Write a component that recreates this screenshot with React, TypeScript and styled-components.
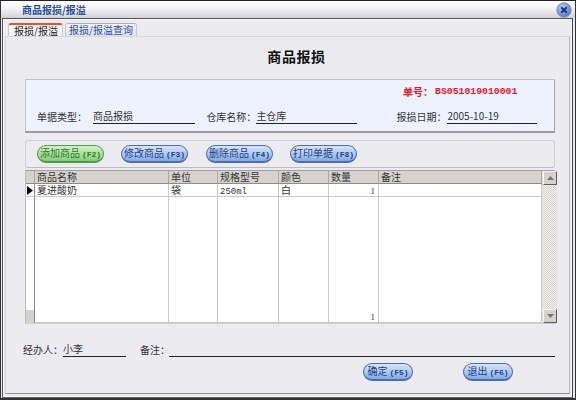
import React from "react";
import styled, { createGlobalStyle } from "styled-components";

const GlobalStyle = createGlobalStyle`
  html, body {
    margin: 0;
    padding: 0;
    background: #ecebef;
  }
  * {
    box-sizing: border-box;
  }
`;

const CJK = `"Noto Sans CJK SC", "Liberation Sans", sans-serif`;

const Window = styled.div`
  width: 576px;
  height: 400px;
  display: flex;
  flex-direction: column;
  background: #ecebef;
  border-top: 1px solid #222;
  border-left: 1px solid #333;
  border-right: 1px solid #333;
  border-bottom: 2px solid #333;
  font-family: ${CJK};
  font-size: 10px;
  color: #222;
  overflow: hidden;
`;

const TitleBar = styled.div`
  height: 17px;
  flex: none;
  display: flex;
  align-items: center;
  justify-content: space-between;
  padding: 0 3px 0 21px;
  background: linear-gradient(#ffffff, #f3f3f5 45%, #d2d2d4);
`;

const Title = styled.span`
  font-size: 10px;
  font-weight: 700;
  line-height: 12px;
  color: #2a4f96;
`;

const Frame = styled.div`
  flex: 1;
  min-height: 0;
  margin: 0 2px 0 1px;
  display: flex;
  flex-direction: column;
  border: 1px solid #555;
  border-right-color: #444;
  border-bottom-color: #666;
  box-shadow: inset 0 0 0 1px #f6f6f6;
  padding: 4px 2px 3px 2px;
`;

const TabStrip = styled.div`
  height: 13px;
  flex: none;
  display: flex;
  gap: 2px;
  padding-left: 3px;
`;

const Tab = styled.div<{ $active?: boolean }>`
  height: 13px;
  padding: 0 0 0 ${(p) => (p.$active ? 5 : 3)}px;
  width: ${(p) => (p.$active ? 55 : 72)}px;
  line-height: 12px;
  white-space: nowrap;
  font-size: 10px;
  color: ${(p) => (p.$active ? "#222" : "#2a4f96")};
  background: ${(p) => (p.$active ? "#f6f6f8" : "linear-gradient(#f2f3f8, #dfe3ee)")};
  border: 1px solid #c8cbd6;
  border-bottom: none;
  border-top: ${(p) => (p.$active ? "2px solid #e8522a" : "1px solid #a9afc4")};
  border-radius: 3px 3px 0 0;
`;

const Pane = styled.div`
  flex: 1;
  min-height: 0;
  display: flex;
  flex-direction: column;
  border: 1px solid #d8d8dc;
  border-bottom-color: #8e8e90;
  border-right-color: #b8b8bc;
  padding: 0 14px 0 19px;
`;

const Heading = styled.h1`
  margin: 0;
  height: 42px;
  flex: none;
  display: flex;
  align-items: flex-start;
  justify-content: center;
  padding: 9px 0 0 13px;
  font-size: 14px;
  line-height: 20px;
  font-weight: 700;
  letter-spacing: 0.6px;
  color: #111;
`;

const InfoPanel = styled.div`
  height: 54px;
  flex: none;
  display: flex;
  flex-direction: column;
  background: #edf2fe;
  border: 1px solid #c4c4c8;
  border-bottom: 2px solid #9c9ca0;
  border-right-color: #a4a4a8;
`;

const OrderNo = styled.div`
  height: 13px;
  margin: 5px 0 0 377px;
  display: flex;
  align-items: center;
  color: #f0141e;
  font-weight: 700;
  font-size: 10px;
  white-space: nowrap;
`;

const OrderCode = styled.span`
  margin-left: 2px;
  font-family: "Liberation Mono", monospace;
  font-size: 9.8px;
`;

const InfoRow = styled.div`
  margin-top: 11px;
  display: flex;
  padding-left: 11px;
`;

const Field = styled.div<{ $w: number }>`
  width: ${(p) => p.$w}px;
  display: flex;
  align-items: flex-end;
  white-space: nowrap;
`;

const Label = styled.span<{ $w: number }>`
  flex: none;
  width: ${(p) => p.$w}px;
  line-height: 14px;
  color: #333;
`;

const Value = styled.span<{ $w: number }>`
  flex: none;
  width: ${(p) => p.$w}px;
  height: 15px;
  line-height: 13px;
  color: #333;
  border-bottom: 1px solid #222;
`;

const ToolPanel = styled.div`
  height: 28px;
  flex: none;
  margin-top: 7px;
  display: flex;
  align-items: center;
  padding: 0 0 1px 11px;
  background: #ecebef;
  border: 1px solid #cfcfd3;
  border-radius: 3px;
  border-bottom-color: #bcbcc0;
`;

const Pill = styled.button<{ $green?: boolean; $w: number; $gap?: number }>`
  width: ${(p) => p.$w}px;
  height: 18px;
  margin: 0 ${(p) => p.$gap ?? 0}px 0 0;
  padding: 0;
  flex: none;
  font-family: ${CJK};
  font-size: 10px;
  line-height: 14px;
  white-space: nowrap;
  color: ${(p) => (p.$green ? "#2e7a2c" : "#26408c")};
  border-radius: 9px;
  border: 1px solid ${(p) => (p.$green ? "#4f9a50" : "#4f6cb0")};
  border-bottom-width: 2px;
  background: ${(p) =>
    p.$green
      ? "linear-gradient(#d2f0c8, #aee09e 50%, #86cd78)"
      : "linear-gradient(#d6e4f8, #aecbf0 50%, #83a9e2)"};
`;

const Fkey = styled.span`
  font-family: "Liberation Mono", monospace;
  font-size: 8px;
  font-weight: 700;
  margin-left: 2px;
`;

const GridBox = styled.div`
  height: 154px;
  flex: none;
  margin-top: 2px;
  display: grid;
  grid-template-columns: 9px 134px 49px 61px 50px 50px 163px 15px;
  grid-template-rows: 13px 13px 1fr 13px;
  background: #fff;
  border: 1px solid #bcbcbc;
  border-top: 1px solid #a0a0a0;
  border-bottom: 1px solid #d0d0d0;
`;

const HeadCell = styled.div`
  background: #d6d3ce;
  border-right: 1px solid #a8a8a4;
  border-bottom: 1px solid #8c8c88;
  padding-left: 2px;
  line-height: 12px;
  color: #333;
  white-space: nowrap;
`;

const RowHead = styled.div<{ $plain?: boolean; $grey?: boolean }>`
  display: flex;
  align-items: center;
  justify-content: center;
  background: ${(p) => (p.$grey ? "#d6d3ce" : "#fff")};
  border-right: 1px solid #8c8c88;
  border-bottom: ${(p) => (p.$plain ? "none" : "1px solid #c8c8c8")};
`;

const Cell = styled.div<{ $right?: boolean; $bare?: boolean }>`
  border-right: 1px solid #c8c8c8;
  border-bottom: ${(p) => (p.$bare ? "none" : "1px solid #c8c8c8")};
  padding: 0 ${(p) => (p.$right ? 3 : 1)}px 0 2px;
  text-align: ${(p) => (p.$right ? "right" : "left")};
  line-height: 12px;
  color: #333;
  white-space: nowrap;
`;

const NumText = styled.span`
  font-family: "Liberation Serif", serif;
  font-size: 9px;
`;

const SpecText = styled.span`
  font-family: "Liberation Mono", monospace;
  font-size: 9px;
`;

const ScrollBar = styled.div`
  grid-column: 8;
  grid-row: 1 / 5;
  display: flex;
  flex-direction: column;
  justify-content: space-between;
  background-color: #ecebe6;
  background-image: conic-gradient(#d6d3ce 25%, #f4f3f0 0 50%, #d6d3ce 0 75%, #f4f3f0 0);
  background-size: 2px 2px;
`;

const ScrollBtn = styled.div`
  width: 14px;
  height: 14px;
  margin-left: 1px;
  display: flex;
  align-items: center;
  justify-content: center;
  background: #d6d3ce;
  border: 1px solid;
  border-color: #f4f4f2 #5c5c5a #5c5c5a #f4f4f2;
`;

const Footer = styled.div`
  display: flex;
  margin: 18px 0 0 -2px;
  align-items: flex-end;
`;

const Actions = styled.div`
  display: flex;
  margin: 6px 0 0 338px;
  gap: 50px;
`;

const CloseIcon = () => (
  <svg width="16" height="16" viewBox="0 0 16 16">
    <defs>
      <radialGradient id="closeFill" cx="40%" cy="35%" r="70%">
        <stop offset="0" stopColor="#c4d6f6" />
        <stop offset="1" stopColor="#4e72c4" />
      </radialGradient>
    </defs>
    <circle cx="8" cy="8" r="7.2" fill="url(#closeFill)" stroke="#7f93bd" strokeWidth="1" />
    <path d="M5.2 5.2 L10.8 10.8 M10.8 5.2 L5.2 10.8" stroke="#1f3b80" strokeWidth="2.2" />
  </svg>
);

const Arrow = ({ dir }: { dir: "up" | "down" }) => (
  <svg width="7" height="4" viewBox="0 0 7 4">
    <path d={dir === "up" ? "M3.5 0 L7 4 L0 4 Z" : "M0 0 L7 0 L3.5 4 Z"} fill="#77777a" />
  </svg>
);

const RowMark = () => (
  <svg width="6" height="9" viewBox="0 0 6 9">
    <path d="M0 0 L6 4.5 L0 9 Z" fill="#000" />
  </svg>
);

const columns = ["商品名称", "单位", "规格型号", "颜色", "数量", "备注"];

export default function App() {
  return (
    <>
      <GlobalStyle />
      <Window>
        <TitleBar>
          <Title>商品报损/报溢</Title>
          <CloseIcon />
        </TitleBar>
        <Frame>
          <TabStrip>
            <Tab $active>报损/报溢</Tab>
            <Tab>报损/报溢查询</Tab>
          </TabStrip>
          <Pane>
            <Heading>商品报损</Heading>
            <InfoPanel>
              <OrderNo>
                单号：<OrderCode>BS051019010001</OrderCode>
              </OrderNo>
              <InfoRow>
                <Field $w={172}>
                  <Label $w={56}>单据类型：</Label>
                  <Value $w={102}>商品报损</Value>
                </Field>
                <Field $w={193}>
                  <Label $w={50}>仓库名称：</Label>
                  <Value $w={101}>主仓库</Value>
                </Field>
                <Field $w={160}>
                  <Label $w={51}>报损日期：</Label>
                  <Value $w={90}>2005-10-19</Value>
                </Field>
              </InfoRow>
            </InfoPanel>
            <ToolPanel>
              <Pill $green $w={67} $gap={17}>
                添加商品<Fkey>(F2)</Fkey>
              </Pill>
              <Pill $w={67} $gap={18}>
                修改商品<Fkey>(F3)</Fkey>
              </Pill>
              <Pill $w={67} $gap={17}>
                删除商品<Fkey>(F4)</Fkey>
              </Pill>
              <Pill $w={67}>
                打印单据<Fkey>(F8)</Fkey>
              </Pill>
            </ToolPanel>
            <GridBox>
              <HeadCell />
              {columns.map((c) => (
                <HeadCell key={c}>{c}</HeadCell>
              ))}
              <ScrollBar>
                <ScrollBtn>
                  <Arrow dir="up" />
                </ScrollBtn>
                <ScrollBtn>
                  <Arrow dir="down" />
                </ScrollBtn>
              </ScrollBar>

              <RowHead>
                <RowMark />
              </RowHead>
              <Cell>夏进酸奶</Cell>
              <Cell>袋</Cell>
              <Cell>
                <SpecText>250ml</SpecText>
              </Cell>
              <Cell>白</Cell>
              <Cell $right>
                <NumText>1</NumText>
              </Cell>
              <Cell />

              <RowHead $plain />
              {columns.map((c) => (
                <Cell key={c} $bare />
              ))}

              <RowHead $grey $plain />
              <Cell />
              <Cell />
              <Cell />
              <Cell />
              <Cell $right>
                <NumText>1</NumText>
              </Cell>
              <Cell />
            </GridBox>
            <Footer>
              <Field $w={120}>
                <Label $w={40}>经办人：</Label>
                <Value $w={63}>小李</Value>
              </Field>
              <Field $w={415}>
                <Label $w={29}>备注：</Label>
                <Value $w={386} />
              </Field>
            </Footer>
            <Actions>
              <Pill $w={50}>
                确定<Fkey>(F5)</Fkey>
              </Pill>
              <Pill $w={50}>
                退出<Fkey>(F6)</Fkey>
              </Pill>
            </Actions>
          </Pane>
        </Frame>
      </Window>
    </>
  );
}
